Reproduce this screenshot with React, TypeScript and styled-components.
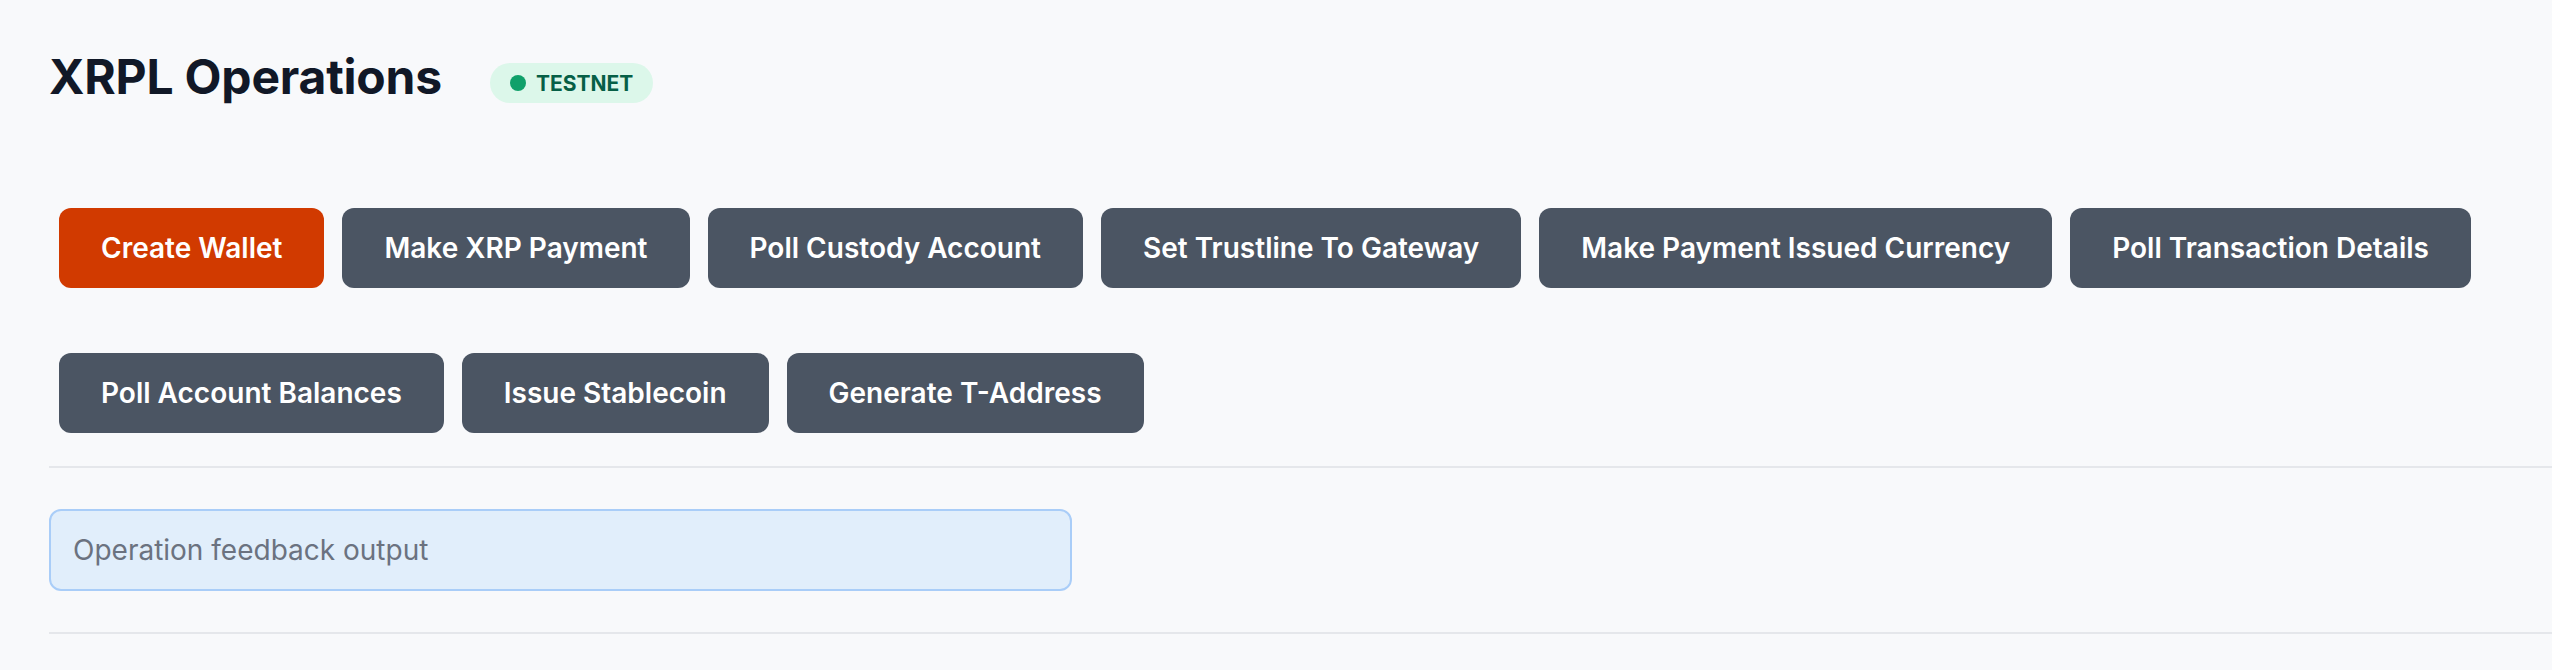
import React from 'react';
import styled, { createGlobalStyle } from 'styled-components';

const GlobalStyle = createGlobalStyle`
  html, body {
    margin: 0;
    padding: 0;
    background: #f8f9fb;
    font-family: Inter, "Noto Sans", "Liberation Sans", sans-serif;
  }
`;

const Page = styled.main`
  min-height: 670px;
  padding: 0 0 0 49px;
  box-sizing: border-box;
`;

const Header = styled.header`
  display: flex;
  align-items: center;
  gap: 48px;
  height: 115px;
  padding-top: 51px;
  box-sizing: border-box;
`;

const Title = styled.h1`
  margin: 0;
  font-size: 48px;
  font-weight: 700;
  color: #111827;
  letter-spacing: -0.2px;
  line-height: 1;
  position: relative;
  top: -6px;
`;

const Badge = styled.span`
  display: inline-flex;
  align-items: center;
  gap: 10px;
  height: 40px;
  padding: 0 20px 0 20px;
  border-radius: 20px;
  background: #dcf7ea;
  color: #065f46;
  font-size: 21px;
  font-weight: 700;
`;

const Dot = styled.span`
  width: 16px;
  height: 16px;
  border-radius: 50%;
  background: #10a06a;
`;

const Actions = styled.section`
  display: flex;
  flex-direction: column;
  gap: 65px;
  margin: 93px 0 0 10px;
`;

const ButtonRow = styled.div`
  display: flex;
  gap: 18px;
`;

const ActionButton = styled.button<{ $primary?: boolean }>`
  height: 80px;
  padding: 0 42px;
  border: none;
  border-radius: 12px;
  background: ${({ $primary }) => ($primary ? '#d13a00' : '#4b5563')};
  color: #ffffff;
  font-family: inherit;
  font-size: 28px;
  font-weight: 600;
  white-space: nowrap;
  cursor: pointer;
`;

const Divider = styled.hr<{ $gap: number }>`
  margin: ${({ $gap }) => $gap}px 0 0;
  border: none;
  border-top: 2px solid #e5e7eb;
`;

const Feedback = styled.div`
  display: flex;
  align-items: center;
  width: 1023px;
  height: 82px;
  margin-top: 41px;
  padding: 0 22px;
  box-sizing: border-box;
  border: 2px solid #a9cdf8;
  border-radius: 12px;
  background: #e1eefb;
  color: #6b7280;
  font-size: 28px;
`;

const rows = [
  [
    'Create Wallet',
    'Make XRP Payment',
    'Poll Custody Account',
    'Set Trustline To Gateway',
    'Make Payment Issued Currency',
    'Poll Transaction Details',
  ],
  ['Poll Account Balances', 'Issue Stablecoin', 'Generate T-Address'],
];

const App: React.FC = () => (
  <>
    <GlobalStyle />
    <Page>
      <Header>
        <Title>XRPL Operations</Title>
        <Badge>
          <Dot />
          TESTNET
        </Badge>
      </Header>

      <Actions>
        {rows.map((row, i) => (
          <ButtonRow key={i}>
            {row.map((label) => (
              <ActionButton key={label} $primary={label === 'Create Wallet'}>
                {label}
              </ActionButton>
            ))}
          </ButtonRow>
        ))}
      </Actions>

      <Divider $gap={33} />
      <Feedback>Operation feedback output</Feedback>
      <Divider $gap={41} />
    </Page>
  </>
);

export default App;
